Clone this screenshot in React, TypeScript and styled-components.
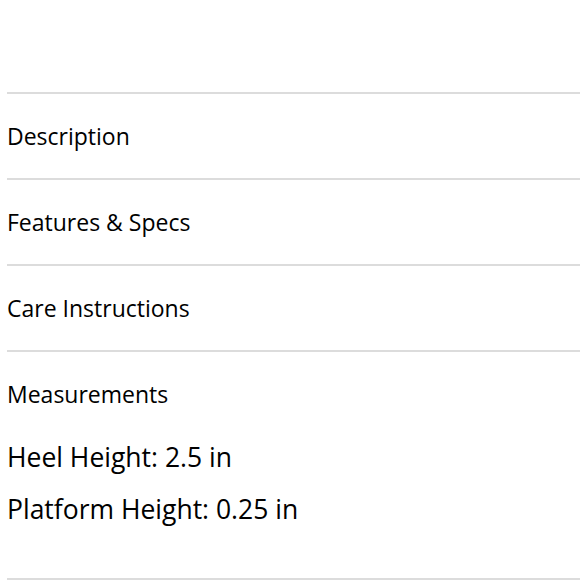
import React from "react";
import styled, { createGlobalStyle } from "styled-components";

const GlobalStyle = createGlobalStyle`
  body {
    margin: 0;
    background: #fff;
    font-family: "Open Sans", "Liberation Sans", sans-serif;
    color: #000;
  }
`;

const Page = styled.div`
  padding: 92px 0 0 7px;
`;

const Accordion = styled.div`
  border-bottom: 2px solid #dcdcdc;
`;

const Item = styled.section`
  border-top: 2px solid #dcdcdc;
`;

const Header = styled.div`
  height: 84px;
  display: flex;
  align-items: center;
  font-size: 23px;
  font-weight: 400;
`;

const Body = styled.div`
  margin-top: -5px;
  padding-bottom: 43px;
`;

const Line = styled.p`
  margin: 0;
  font-size: 26.5px;
  line-height: 52px;
`;

const sections = ["Description", "Features & Specs", "Care Instructions"];

export default function App() {
  return (
    <>
      <GlobalStyle />
      <Page>
        <Accordion>
          {sections.map((s) => (
            <Item key={s}>
              <Header>{s}</Header>
            </Item>
          ))}
          <Item>
            <Header>Measurements</Header>
            <Body>
              <Line>Heel Height: 2.5 in</Line>
              <Line>Platform Height: 0.25 in</Line>
            </Body>
          </Item>
        </Accordion>
      </Page>
    </>
  );
}
